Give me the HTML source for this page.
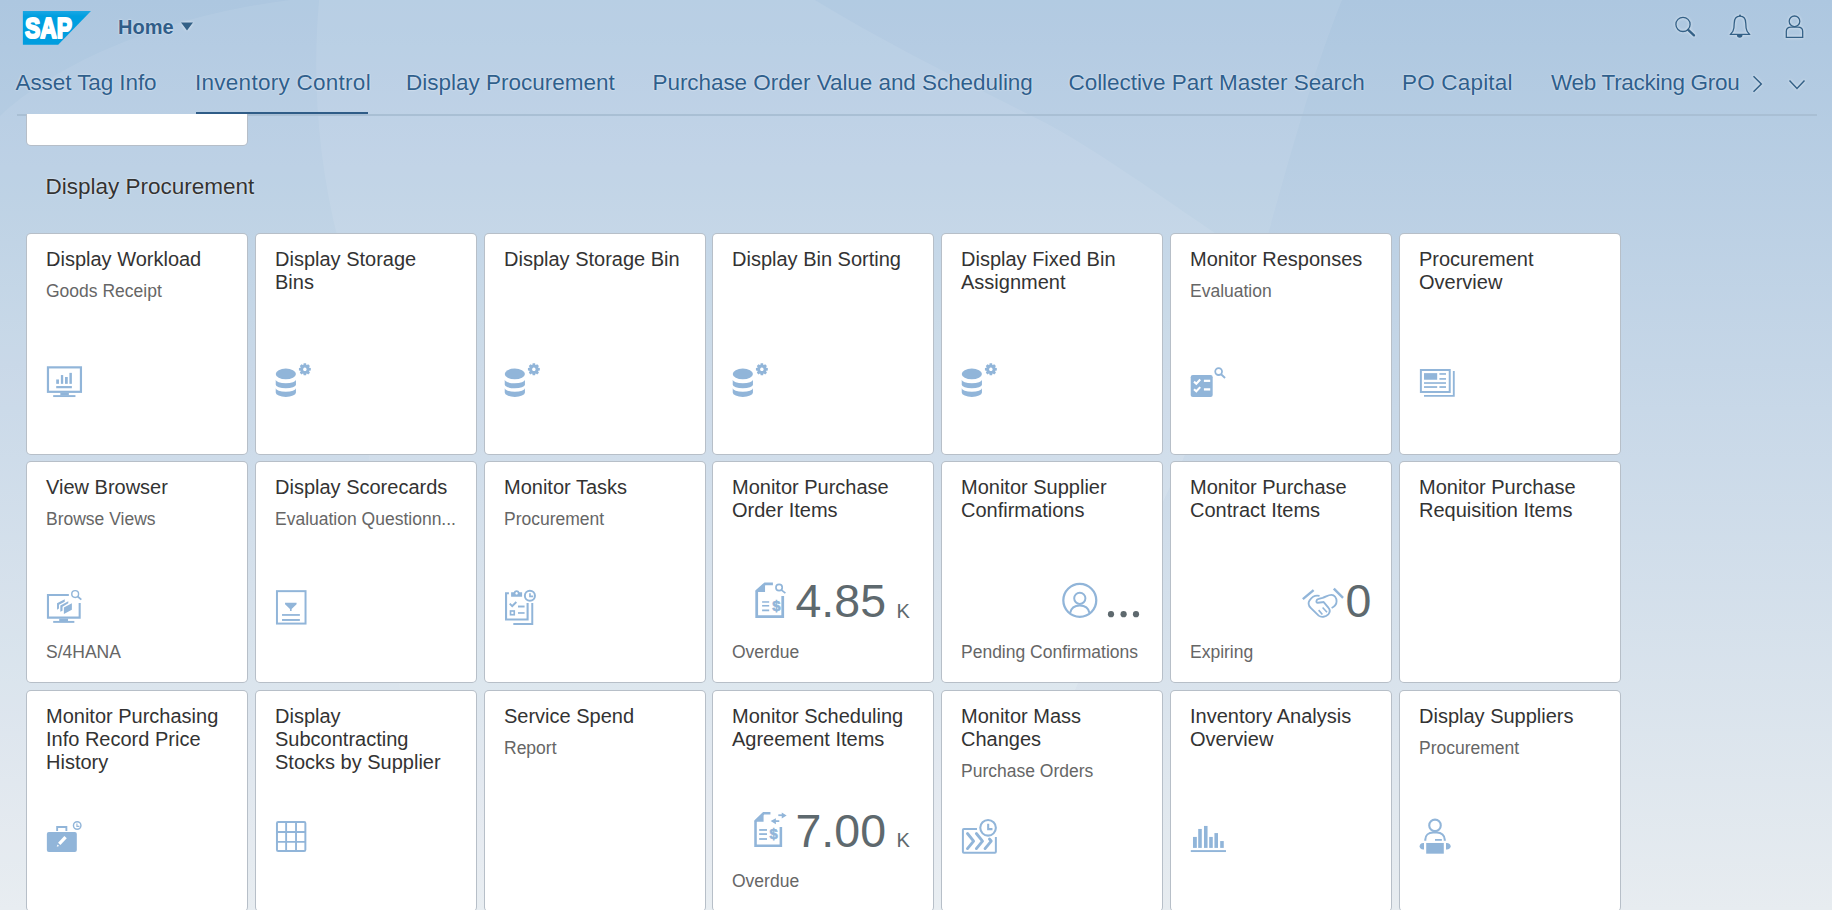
<!DOCTYPE html><html><head><meta charset="utf-8"><style>

html,body{margin:0;padding:0;}
body{width:1832px;height:910px;overflow:hidden;position:relative;font-family:"Liberation Sans", sans-serif;background:#c3d5e6;}
.abs{position:absolute;white-space:nowrap;}
.tile{position:absolute;width:220px;height:220px;background:#fff;border:1px solid rgba(30,55,85,0.32);border-radius:5px;box-sizing:content-box;}
.tt{position:absolute;left:19px;font-size:20px;line-height:23px;color:#333;white-space:nowrap;}
.st{position:absolute;left:19px;font-size:17.5px;line-height:20px;color:#666;white-space:nowrap;}
.ft{position:absolute;left:19px;font-size:17.5px;line-height:20px;color:#666;white-space:nowrap;}
.tab{position:absolute;font-size:22.5px;line-height:26px;color:#2f5f8c;white-space:nowrap;text-shadow:0 0 2px rgba(255,255,255,0.8);}
.num{position:absolute;font-size:46.5px;line-height:52px;color:#5e696e;white-space:nowrap;}
.unit{position:absolute;font-size:20px;line-height:22px;color:#5e696e;white-space:nowrap;}

</style></head><body>
<svg class="abs" style="left:0;top:0" width="1832" height="910" viewBox="0 0 1832 910">
<defs><linearGradient id="bg" x1="0" y1="0" x2="0" y2="1"><stop offset="0" stop-color="#adc7e0"/><stop offset="0.45" stop-color="#c8d8e8"/><stop offset="1" stop-color="#e7ecf0"/></linearGradient></defs>
<rect width="1832" height="910" fill="url(#bg)"/>
<path d="M0 116 C 60 60, 170 15, 290 0 H1342 C 1318 60, 1300 120, 1268 235 L1184 457 L1077 686 L970 910 H0 Z" fill="#ffffff" fill-opacity="0.07"/>
<path d="M319 0 C 312 80, 318 160, 338 240 C 370 450, 400 700, 430 910 H970 L1077 686 L1184 457 L1262 264 C 1200 225, 1100 150, 1040 120 C 960 80, 880 40, 815 0 Z" fill="#ffffff" fill-opacity="0.08"/>
</svg>
<div class="tile" style="left:26px;top:233px"><div class="tt" style="top:13.77px">Display Workload</div><div class="st" style="top:47.14px">Goods Receipt</div></div>
<div class="tile" style="left:255px;top:233px"><div class="tt" style="top:13.77px">Display Storage</div><div class="tt" style="top:36.77px">Bins</div></div>
<div class="tile" style="left:484px;top:233px"><div class="tt" style="top:13.77px">Display Storage Bin</div></div>
<div class="tile" style="left:712px;top:233px"><div class="tt" style="top:13.77px">Display Bin Sorting</div></div>
<div class="tile" style="left:941px;top:233px"><div class="tt" style="top:13.77px">Display Fixed Bin</div><div class="tt" style="top:36.77px">Assignment</div></div>
<div class="tile" style="left:1170px;top:233px"><div class="tt" style="top:13.77px">Monitor Responses</div><div class="st" style="top:47.14px">Evaluation</div></div>
<div class="tile" style="left:1399px;top:233px"><div class="tt" style="top:13.77px">Procurement</div><div class="tt" style="top:36.77px">Overview</div></div>
<div class="tile" style="left:26px;top:461px"><div class="tt" style="top:13.77px">View Browser</div><div class="st" style="top:47.14px">Browse Views</div><div class="ft" style="top:179.64px">S/4HANA</div></div>
<div class="tile" style="left:255px;top:461px"><div class="tt" style="top:13.77px">Display Scorecards</div><div class="st" style="top:47.14px">Evaluation Questionn...</div></div>
<div class="tile" style="left:484px;top:461px"><div class="tt" style="top:13.77px">Monitor Tasks</div><div class="st" style="top:47.14px">Procurement</div></div>
<div class="tile" style="left:712px;top:461px"><div class="tt" style="top:13.77px">Monitor Purchase</div><div class="tt" style="top:36.77px">Order Items</div><div class="ft" style="top:179.64px">Overdue</div></div>
<div class="tile" style="left:941px;top:461px"><div class="tt" style="top:13.77px">Monitor Supplier</div><div class="tt" style="top:36.77px">Confirmations</div><div class="ft" style="top:179.64px">Pending Confirmations</div></div>
<div class="tile" style="left:1170px;top:461px"><div class="tt" style="top:13.77px">Monitor Purchase</div><div class="tt" style="top:36.77px">Contract Items</div><div class="ft" style="top:179.64px">Expiring</div></div>
<div class="tile" style="left:1399px;top:461px"><div class="tt" style="top:13.77px">Monitor Purchase</div><div class="tt" style="top:36.77px">Requisition Items</div></div>
<div class="tile" style="left:26px;top:690px"><div class="tt" style="top:13.77px">Monitor Purchasing</div><div class="tt" style="top:36.77px">Info Record Price</div><div class="tt" style="top:59.77px">History</div></div>
<div class="tile" style="left:255px;top:690px"><div class="tt" style="top:13.77px">Display</div><div class="tt" style="top:36.77px">Subcontracting</div><div class="tt" style="top:59.77px">Stocks by Supplier</div></div>
<div class="tile" style="left:484px;top:690px"><div class="tt" style="top:13.77px">Service Spend</div><div class="st" style="top:47.14px">Report</div></div>
<div class="tile" style="left:712px;top:690px"><div class="tt" style="top:13.77px">Monitor Scheduling</div><div class="tt" style="top:36.77px">Agreement Items</div><div class="ft" style="top:179.64px">Overdue</div></div>
<div class="tile" style="left:941px;top:690px"><div class="tt" style="top:13.77px">Monitor Mass</div><div class="tt" style="top:36.77px">Changes</div><div class="st" style="top:70.14px">Purchase Orders</div></div>
<div class="tile" style="left:1170px;top:690px"><div class="tt" style="top:13.77px">Inventory Analysis</div><div class="tt" style="top:36.77px">Overview</div></div>
<div class="tile" style="left:1399px;top:690px"><div class="tt" style="top:13.77px">Display Suppliers</div><div class="st" style="top:47.14px">Procurement</div></div>
<div class="abs" style="left:45.5px;top:173.50px;font-size:22.5px;line-height:26px;color:#333;text-shadow:0 0 2px rgba(255,255,255,0.9)">Display Procurement</div>
<div class="tab" style="left:15.5px;top:69.50px;letter-spacing:-0.08px">Asset Tag Info</div>
<div class="tab" style="left:195.0px;top:69.50px;letter-spacing:0.27px">Inventory Control</div>
<div class="tab" style="left:406.0px;top:69.50px;letter-spacing:0px">Display Procurement</div>
<div class="tab" style="left:652.5px;top:69.50px;letter-spacing:-0.06px">Purchase Order Value and Scheduling</div>
<div class="tab" style="left:1068.5px;top:69.50px;letter-spacing:-0.05px">Collective Part Master Search</div>
<div class="tab" style="left:1402.0px;top:69.50px;letter-spacing:0.19px">PO Capital</div>
<div class="tab" style="left:1551.0px;top:69.50px;letter-spacing:-0.29px">Web Tracking Grou</div>
<div class="abs" style="left:17px;top:114px;width:1800px;height:2px;background:#a9bfd4"></div>
<div class="abs" style="left:196px;top:112px;width:172px;height:2px;background:#2f5c87"></div>
<div class="abs" style="left:26px;top:114px;width:220px;height:31px;background:#fff;border:1px solid rgba(30,55,85,0.32);border-top:none;border-radius:0 0 5px 5px"></div>
<div class="abs" style="left:118px;top:15.87px;font-size:20px;line-height:22px;font-weight:bold;color:#2f5d89;text-shadow:0 0 2px rgba(255,255,255,0.8)">Home</div>
<svg class="abs" style="left:0;top:0;pointer-events:none" width="1832" height="910" viewBox="0 0 1832 910">
<defs><linearGradient id="sapg" x1="0" y1="0" x2="0" y2="1"><stop offset="0" stop-color="#1aa7e3"/><stop offset="0.15" stop-color="#009fe0"/><stop offset="1" stop-color="#009ddf"/></linearGradient></defs>
<path d="M22.9 11.1 H91 L58.2 44.7 H22.9 Z" fill="url(#sapg)"/>
<text x="25" y="38.3" font-family="Liberation Sans" font-weight="bold" font-size="30" fill="#fff" stroke="#fff" stroke-width="2.2" stroke-linejoin="round" textLength="47" lengthAdjust="spacingAndGlyphs">SAP</text>
</svg>
<svg class="abs" style="left:0;top:0;filter:drop-shadow(0 0 1.5px rgba(255,255,255,0.75))" width="1832" height="130" viewBox="0 0 1832 130">
<path d="M181 22.6 H193 L187 30.4 Z" fill="#346187"/>
<g fill="none" stroke="#346187" stroke-width="1.3"><circle cx="1683" cy="24.4" r="7.1"/><path d="M1740 16.2 C 1735.5 16.2 1734.2 20 1734.2 23.5 C 1734.2 27 1733.8 29.5 1733 31 C 1732.2 32.5 1731 33.5 1730.5 34.4 H 1749.5 C 1749 33.5 1747.8 32.5 1747 31 C 1746.2 29.5 1745.8 27 1745.8 23.5 C 1745.8 20 1744.5 16.2 1740 16.2 Z"/><circle cx="1794.5" cy="21.3" r="5.3"/><path d="M1786.3 37.4 V 31.5 C 1786.3 28.8 1788.3 27.2 1791 27.2 H 1798 C 1800.7 27.2 1802.7 28.8 1802.7 31.5 V 37.4 Z"/></g>
<path d="M1688.2 29.8 L1694 35.4" stroke="#346187" stroke-width="2.3" stroke-linecap="round"/>
<path d="M1736.9 35 A 2.8 2.8 0 0 0 1742.5 35 Z" fill="#346187"/><circle cx="1740" cy="15.6" r="1" fill="#346187"/>
<g fill="none" stroke="#346187" stroke-width="1.5"><path d="M1753.5 76.3 L1761.3 84 L1753.5 91.8"/><path d="M1789.5 80.6 L1797 88.4 L1804.5 80.6"/></g>
</svg>
<svg class="abs" style="left:0;top:0" width="1832" height="910" viewBox="0 0 1832 910">
<g transform="translate(40,355) scale(0.05495)"><rect x="145" y="225" width="600" height="445" fill="none" stroke="#91b5d9" stroke-width="40"/><rect x="370" y="688" width="155" height="45" fill="#91b5d9"/><rect x="240" y="730" width="405" height="35" fill="#91b5d9"/><rect x="295" y="445" width="50" height="80" fill="#91b5d9"/><rect x="380" y="365" width="42" height="160" fill="#91b5d9"/><rect x="455" y="400" width="50" height="125" fill="#91b5d9"/><rect x="535" y="325" width="45" height="200" fill="#91b5d9"/><rect x="295" y="565" width="285" height="40" fill="#91b5d9"/></g>
<g transform="translate(272,360) scale(0.04394)"><ellipse cx="315" cy="318" rx="230" ry="122" fill="#91b5d9"/><path d="M85 452 A230 80 0 0 0 545 452 L545 565 A230 80 0 0 1 85 565 Z" fill="#91b5d9"/><path d="M85 645 L85 740 A230 100 0 0 0 545 740 L545 645 A230 75 0 0 1 85 645 Z" fill="#91b5d9"/><path fill-rule="evenodd" d="M848.0 176.9 L883.2 184.2 L883.2 239.8 L848.0 247.1 L843.5 257.9 L863.2 288.0 L824.0 327.2 L793.9 307.5 L783.1 312.0 L775.8 347.2 L720.2 347.2 L712.9 312.0 L702.1 307.5 L672.0 327.2 L632.8 288.0 L652.5 257.9 L648.0 247.1 L612.8 239.8 L612.8 184.2 L648.0 176.9 L652.5 166.1 L632.8 136.0 L672.0 96.8 L702.1 116.5 L712.9 112.0 L720.2 76.8 L775.8 76.8 L783.1 112.0 L793.9 116.5 L824.0 96.8 L863.2 136.0 L843.5 166.1 Z M748 172 A40 40 0 1 0 748.1 172 Z" fill="#91b5d9"/></g>
<g transform="translate(501,360) scale(0.04394)"><ellipse cx="315" cy="318" rx="230" ry="122" fill="#91b5d9"/><path d="M85 452 A230 80 0 0 0 545 452 L545 565 A230 80 0 0 1 85 565 Z" fill="#91b5d9"/><path d="M85 645 L85 740 A230 100 0 0 0 545 740 L545 645 A230 75 0 0 1 85 645 Z" fill="#91b5d9"/><path fill-rule="evenodd" d="M848.0 176.9 L883.2 184.2 L883.2 239.8 L848.0 247.1 L843.5 257.9 L863.2 288.0 L824.0 327.2 L793.9 307.5 L783.1 312.0 L775.8 347.2 L720.2 347.2 L712.9 312.0 L702.1 307.5 L672.0 327.2 L632.8 288.0 L652.5 257.9 L648.0 247.1 L612.8 239.8 L612.8 184.2 L648.0 176.9 L652.5 166.1 L632.8 136.0 L672.0 96.8 L702.1 116.5 L712.9 112.0 L720.2 76.8 L775.8 76.8 L783.1 112.0 L793.9 116.5 L824.0 96.8 L863.2 136.0 L843.5 166.1 Z M748 172 A40 40 0 1 0 748.1 172 Z" fill="#91b5d9"/></g>
<g transform="translate(729,360) scale(0.04394)"><ellipse cx="315" cy="318" rx="230" ry="122" fill="#91b5d9"/><path d="M85 452 A230 80 0 0 0 545 452 L545 565 A230 80 0 0 1 85 565 Z" fill="#91b5d9"/><path d="M85 645 L85 740 A230 100 0 0 0 545 740 L545 645 A230 75 0 0 1 85 645 Z" fill="#91b5d9"/><path fill-rule="evenodd" d="M848.0 176.9 L883.2 184.2 L883.2 239.8 L848.0 247.1 L843.5 257.9 L863.2 288.0 L824.0 327.2 L793.9 307.5 L783.1 312.0 L775.8 347.2 L720.2 347.2 L712.9 312.0 L702.1 307.5 L672.0 327.2 L632.8 288.0 L652.5 257.9 L648.0 247.1 L612.8 239.8 L612.8 184.2 L648.0 176.9 L652.5 166.1 L632.8 136.0 L672.0 96.8 L702.1 116.5 L712.9 112.0 L720.2 76.8 L775.8 76.8 L783.1 112.0 L793.9 116.5 L824.0 96.8 L863.2 136.0 L843.5 166.1 Z M748 172 A40 40 0 1 0 748.1 172 Z" fill="#91b5d9"/></g>
<g transform="translate(958,360) scale(0.04394)"><ellipse cx="315" cy="318" rx="230" ry="122" fill="#91b5d9"/><path d="M85 452 A230 80 0 0 0 545 452 L545 565 A230 80 0 0 1 85 565 Z" fill="#91b5d9"/><path d="M85 645 L85 740 A230 100 0 0 0 545 740 L545 645 A230 75 0 0 1 85 645 Z" fill="#91b5d9"/><path fill-rule="evenodd" d="M848.0 176.9 L883.2 184.2 L883.2 239.8 L848.0 247.1 L843.5 257.9 L863.2 288.0 L824.0 327.2 L793.9 307.5 L783.1 312.0 L775.8 347.2 L720.2 347.2 L712.9 312.0 L702.1 307.5 L672.0 327.2 L632.8 288.0 L652.5 257.9 L648.0 247.1 L612.8 239.8 L612.8 184.2 L648.0 176.9 L652.5 166.1 L632.8 136.0 L672.0 96.8 L702.1 116.5 L712.9 112.0 L720.2 76.8 L775.8 76.8 L783.1 112.0 L793.9 116.5 L824.0 96.8 L863.2 136.0 L843.5 166.1 Z M748 172 A40 40 0 1 0 748.1 172 Z" fill="#91b5d9"/></g>
<g transform="translate(1180,355) scale(0.05495)"><rect x="195" y="365" width="400" height="400" rx="38" fill="#91b5d9"/><path d="M255 485 L297 522 L368 447 M255 622 L297 660 L368 585" fill="none" stroke="#fff" stroke-width="38"/><rect x="435" y="450" width="115" height="40" fill="#fff"/><rect x="435" y="605" width="115" height="42" fill="#fff"/><circle cx="703" cy="302" r="62" fill="none" stroke="#91b5d9" stroke-width="32"/><path d="M748 350 L820 418" stroke="#91b5d9" stroke-width="34"/></g>
<g transform="translate(1410,355) scale(0.05495)"><rect x="198" y="273" width="525" height="400" fill="none" stroke="#91b5d9" stroke-width="36"/><path d="M797 290 V743 H255" fill="none" stroke="#91b5d9" stroke-width="34"/><rect x="255" y="330" width="240" height="120" fill="#91b5d9"/><rect x="535" y="330" width="120" height="30" fill="#91b5d9"/><rect x="535" y="420" width="120" height="30" fill="#91b5d9"/><rect x="255" y="495" width="400" height="30" fill="#91b5d9"/><rect x="255" y="567" width="240" height="32" fill="#91b5d9"/><rect x="535" y="567" width="120" height="32" fill="#91b5d9"/></g>
<g transform="translate(40,580) scale(0.05495)"><path d="M525 272 H145 V685 H722 V420" fill="none" stroke="#91b5d9" stroke-width="38"/><rect x="350" y="703" width="160" height="45" fill="#91b5d9"/><rect x="240" y="745" width="385" height="35" fill="#91b5d9"/><circle cx="640" cy="255" r="62" fill="none" stroke="#91b5d9" stroke-width="26"/><path d="M685 300 L752 357" stroke="#91b5d9" stroke-width="32"/><path d="M310 425 L450 350 L450 395 L345 450 L345 520 L310 540 Z" fill="#91b5d9"/><path d="M370 465 L515 385 L515 425 L410 485 L410 560 L370 580 Z" fill="#91b5d9"/><path d="M435 500 L580 425 L580 540 L435 620 Z" fill="#91b5d9"/></g>
<g transform="translate(268,580) scale(0.05495)"><rect x="163" y="203" width="520" height="590" fill="none" stroke="#91b5d9" stroke-width="36"/><path d="M310 412 H520 V440 L430 530 V565 H400 V530 L310 440 Z" fill="#91b5d9"/><rect x="255" y="620" width="325" height="32" fill="#91b5d9"/><rect x="255" y="710" width="325" height="35" fill="#91b5d9"/></g>
<g transform="translate(496,580) scale(0.05495)"><path d="M235 242 H183 V720 H575 V420" fill="none" stroke="#91b5d9" stroke-width="38"/><path fill-rule="evenodd" d="M275 225 H322 A55 55 0 0 1 428 225 H475 V305 H275 Z M375 220 A22 22 0 1 0 375.1 220 Z" fill="#91b5d9"/><path d="M250 430 L295 475 L370 400" fill="none" stroke="#91b5d9" stroke-width="36"/><rect x="400" y="465" width="120" height="35" fill="#91b5d9"/><rect x="264" y="564" width="68" height="68" fill="none" stroke="#91b5d9" stroke-width="30"/><rect x="400" y="585" width="120" height="30" fill="#91b5d9"/><path d="M660 420 V800 H315" fill="none" stroke="#91b5d9" stroke-width="36"/><circle cx="617" cy="287" r="92" fill="none" stroke="#91b5d9" stroke-width="36"/><path d="M618 243 V298 H675" fill="none" stroke="#91b5d9" stroke-width="30"/></g>
<g transform="translate(740,570) scale(0.09823)"><path d="M335 140 H255 L170 215 V475 H435 V265" fill="none" stroke="#91b5d9" stroke-width="28"/><path d="M158 225 L255 133 V225 Z" fill="#91b5d9"/><rect x="225" y="318" width="72" height="15" fill="#91b5d9"/><rect x="225" y="356" width="72" height="16" fill="#91b5d9"/><rect x="225" y="402" width="72" height="18" fill="#91b5d9"/><text x="370" y="418" font-family="Liberation Sans" font-weight="bold" font-size="150" fill="#91b5d9" stroke="#91b5d9" stroke-width="6" text-anchor="middle">$</text><circle cx="398" cy="178" r="32" fill="none" stroke="#91b5d9" stroke-width="17"/><path d="M420 202 L462 235" stroke="#91b5d9" stroke-width="18"/></g>
<g transform="translate(1050,570) scale(0.06592)"><circle cx="452" cy="460" r="250" fill="none" stroke="#91b5d9" stroke-width="34"/><circle cx="452" cy="430" r="85" fill="none" stroke="#91b5d9" stroke-width="30"/><path d="M305 652 C 320 580, 380 540, 452 540 C 524 540, 584 580, 599 652" fill="none" stroke="#91b5d9" stroke-width="30"/></g>
<g transform="translate(1298,582) scale(0.04394)"><path d="M110 390 L355 185" stroke="#91b5d9" stroke-width="55"/><path d="M815 150 L1025 360" stroke="#91b5d9" stroke-width="55"/><path d="M490 318 C 400 295, 310 350, 262 420 C 225 475, 245 545, 295 595 L 470 765 C 530 815, 630 795, 690 735 C 735 685, 730 630, 690 585 L 590 462" fill="none" stroke="#91b5d9" stroke-width="42" stroke-linejoin="round"/><path d="M600 455 L450 472 C 405 478, 405 400, 470 385 L 560 360 C 640 335, 690 292, 760 292 C 830 292, 878 360, 878 440 C 878 510, 830 560, 765 592" fill="none" stroke="#91b5d9" stroke-width="42" stroke-linejoin="round"/><path d="M470 640 L555 740 M560 580 L660 690" stroke="#91b5d9" stroke-width="36"/></g>
<g transform="translate(40,810) scale(0.05495)"><rect x="125" y="400" width="545" height="365" rx="35" fill="#91b5d9"/><path d="M312 380 V310 H480 V380" fill="none" stroke="#91b5d9" stroke-width="34"/><path d="M465 495 L350 615" stroke="#fff" stroke-width="60"/><path d="M305 670 L320 628 L348 655 Z" fill="#fff"/><circle cx="677" cy="282" r="68" fill="none" stroke="#91b5d9" stroke-width="26"/><path d="M672 245 V298 H718" fill="none" stroke="#91b5d9" stroke-width="20"/></g>
<g transform="translate(268,810) scale(0.05495)"><rect x="163" y="218" width="517" height="527" rx="22" fill="none" stroke="#91b5d9" stroke-width="36"/><path d="M330 218 V745 M510 218 V745 M163 400 H680 M163 580 H680" stroke="#91b5d9" stroke-width="34"/></g>
<g transform="translate(740,800) scale(0.09823)"><path d="M310 135 H240 L158 215 V466 H416 V275" fill="none" stroke="#91b5d9" stroke-width="26"/><path d="M146 222 L240 125 V222 Z" fill="#91b5d9"/><rect x="195" y="296" width="80" height="18" fill="#91b5d9"/><rect x="195" y="338" width="80" height="18" fill="#91b5d9"/><rect x="195" y="388" width="80" height="18" fill="#91b5d9"/><text x="343" y="398" font-family="Liberation Sans" font-weight="bold" font-size="150" fill="#91b5d9" stroke="#91b5d9" stroke-width="6" text-anchor="middle">$</text><path d="M390 155 H440" stroke="#91b5d9" stroke-width="18"/><path d="M425 128 L475 157 L425 188 Z" fill="#91b5d9"/><path d="M400 215 H355" stroke="#91b5d9" stroke-width="18"/><path d="M365 185 L312 215 L365 248 Z" fill="#91b5d9"/></g>
<g transform="translate(954,810) scale(0.05495)"><path d="M418 345 H180 Q162 345 162 363 V760 Q162 777 180 777 H744 Q762 777 762 760 V490" fill="none" stroke="#91b5d9" stroke-width="36"/><path d="M245 428 L357 565 L245 702 M407 428 L519 565 L407 702 M565 702 L677 565 L645 528" fill="none" stroke="#91b5d9" stroke-width="52" stroke-linecap="round" stroke-linejoin="round"/><circle cx="620" cy="325" r="142" fill="none" stroke="#91b5d9" stroke-width="38"/><path d="M622 252 V348 H700" fill="none" stroke="#91b5d9" stroke-width="38"/></g>
<g transform="translate(1182,810) scale(0.05495)"><rect x="200" y="490" width="70" height="200" fill="#91b5d9"/><rect x="295" y="345" width="65" height="345" fill="#91b5d9"/><rect x="400" y="290" width="65" height="400" fill="#91b5d9"/><rect x="495" y="490" width="65" height="200" fill="#91b5d9"/><rect x="590" y="420" width="65" height="270" fill="#91b5d9"/><rect x="695" y="565" width="65" height="125" fill="#91b5d9"/><rect x="160" y="730" width="640" height="35" fill="#91b5d9"/></g>
<g transform="translate(1410,810) scale(0.05495)"><circle cx="455" cy="280" r="105" fill="none" stroke="#91b5d9" stroke-width="38"/><path d="M278 560 V540 C 278 460, 340 410, 420 410 H490 C 570 410, 633 460, 633 540 V560" fill="none" stroke="#91b5d9" stroke-width="38"/><rect x="455" y="528" width="125" height="32" fill="#91b5d9"/><rect x="295" y="600" width="320" height="195" fill="#91b5d9"/><path d="M255 600 H240 C 200 600, 175 630, 175 660 C 175 690, 200 720, 240 720 H255 Z" fill="#91b5d9"/><path d="M655 600 H670 C 710 600, 740 630, 740 660 C 740 690, 710 720, 670 720 H655 Z" fill="#91b5d9"/></g>
</svg>
<div class="num" style="left:795.5px;top:575.19px">4.85</div>
<div class="unit" style="left:896.5px;top:600.07px">K</div>
<div class="num" style="left:795.5px;top:804.69px">7.00</div>
<div class="unit" style="left:896.5px;top:829.07px">K</div>
<div class="num" style="left:1345.5px;top:575.19px">0</div>
<svg class="abs" style="left:0;top:0" width="1832" height="910"><g fill="#5e696e"><circle cx="1111" cy="614.2" r="3.1"/><circle cx="1123.6" cy="614.2" r="3.1"/><circle cx="1136" cy="614.2" r="3.1"/></g></svg>
</body></html>
